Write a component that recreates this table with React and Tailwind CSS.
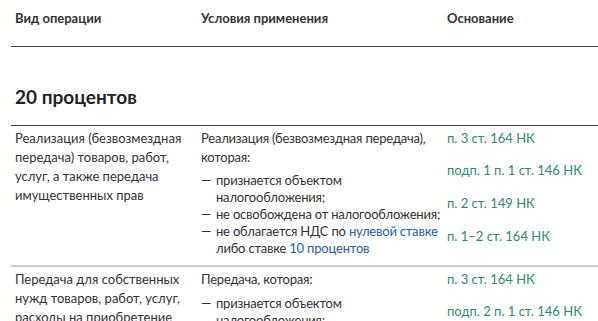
export default function App() {
  const green = "text-[#2f8a74]";
  const blue = "text-[#2361b0]";
  const Dash = () => <span className="w-[15px] shrink-0">—</span>;
  return (
    <div className="w-[598px] h-[321px] overflow-hidden bg-white text-[#333] text-[13px]" style={{ fontFamily: 'Lato, "Noto Sans", sans-serif' }}>
      <div className="pl-[11px]">
        {/* header */}
        <div className="flex h-[47px] border-b border-[#444] pt-[9px] font-bold text-[13px] leading-[19px]">
          <div className="w-[190px] pl-[4px]">Вид операции</div>
          <div className="w-[246px]">Условия применения</div>
          <div>Основание</div>
        </div>
        {/* section heading */}
        <div className="h-[79px] border-b border-[#444] flex items-end pb-[15px] pl-[4px]">
          <div className="font-bold text-[19px] leading-[26px] text-[#222]">20 процентов</div>
        </div>
        {/* row 1 */}
        <div className="flex border-b-2 border-[#cfcfcf] pt-[3px] h-[141px] leading-[19px]">
          <div className="w-[190px] pl-[4px] pr-[10px]">
            Реализация (безвозмездная передача) товаров, работ, услуг, а также передача имущественных прав
          </div>
          <div className="w-[246px] whitespace-nowrap tracking-[-0.2px]">
            <div className="mb-[5px]">Реализация (безвозмездная передача),<br />которая:</div>
            <div className="leading-[17px]">
              <div className="flex"><Dash /><span>признается объектом<br />налогообложения;</span></div>
              <div className="flex"><Dash /><span>не освобождена от налогообложения;</span></div>
              <div className="flex"><Dash /><span>не облагается НДС по <span className={blue}>нулевой ставке</span><br />либо ставке <span className={blue}>10 процентов</span></span></div>
            </div>
          </div>
          <div className={`${green} flex flex-col`}>
            <div className="h-[32px]">п. 3 ст. 164 НК</div>
            <div className="h-[33px]">подп. 1 п. 1 ст. 146 НК</div>
            <div className="h-[33px]">п. 2 ст. 149 НК</div>
            <div>п. 1–2 ст. 164 НК</div>
          </div>
        </div>
        {/* row 2 */}
        <div className="flex pt-[3px] leading-[19px]">
          <div className="w-[190px] pl-[4px] pr-[10px]">
            Передача для собственных нужд товаров, работ, услуг, расходы на приобретение
          </div>
          <div className="w-[246px] whitespace-nowrap tracking-[-0.2px]">
            <div className="mb-[6px]">Передача, которая:</div>
            <div className="leading-[17px]">
              <div className="flex"><Dash /><span>признается объектом<br />налогообложения;</span></div>
            </div>
          </div>
          <div className={`${green} flex flex-col`}>
            <div className="h-[32px]">п. 3 ст. 164 НК</div>
            <div>подп. 2 п. 1 ст. 146 НК</div>
          </div>
        </div>
      </div>
    </div>
  );
}
